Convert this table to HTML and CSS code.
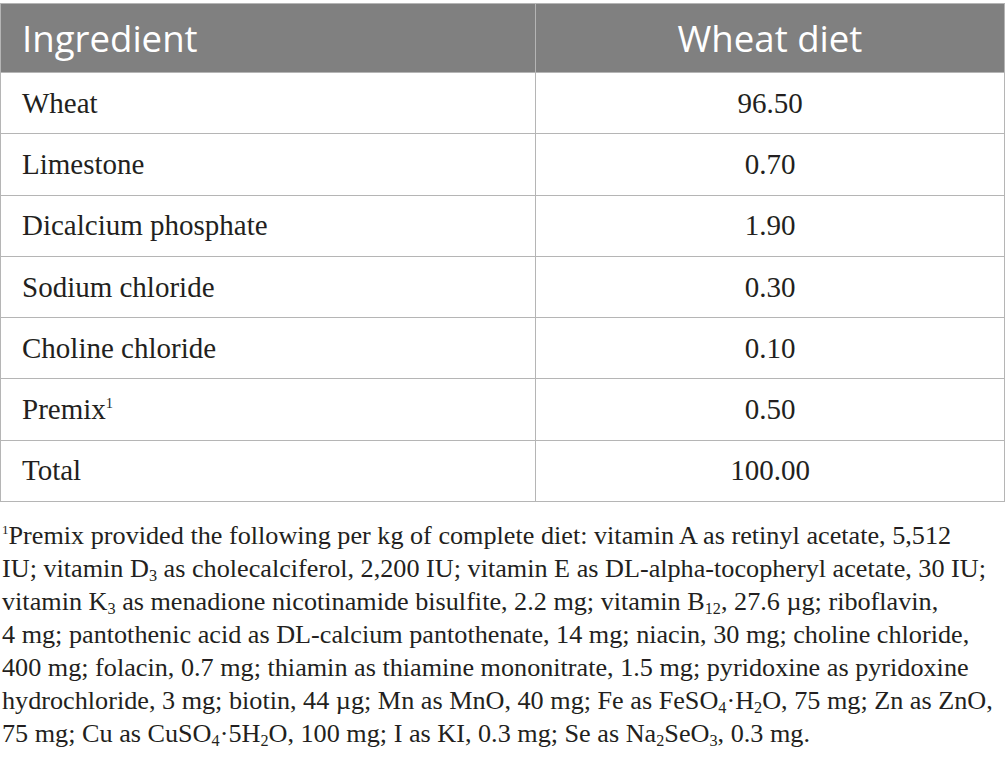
FILE: index.html
```html
<!DOCTYPE html>
<html lang="en">
<head>
<meta charset="utf-8">
<title>Diet composition</title>
<link rel="stylesheet" href="styles.css">
</head>
<body>
<div class="page">
  <table class="diet">
    <colgroup>
      <col class="col-name">
      <col class="col-val">
    </colgroup>
    <thead>
      <tr><th class="h-name">Ingredient</th><th class="h-val">Wheat diet</th></tr>
    </thead>
    <tbody>
      <tr><td class="name">Wheat</td><td class="num">96.50</td></tr>
      <tr><td class="name">Limestone</td><td class="num">0.70</td></tr>
      <tr><td class="name">Dicalcium phosphate</td><td class="num">1.90</td></tr>
      <tr><td class="name">Sodium chloride</td><td class="num">0.30</td></tr>
      <tr><td class="name">Choline chloride</td><td class="num">0.10</td></tr>
      <tr><td class="name">Premix<sup class="ref">1</sup></td><td class="num">0.50</td></tr>
      <tr><td class="name">Total</td><td class="num">100.00</td></tr>
    </tbody>
  </table>
  <p class="note"><sup class="ref">1</sup>Premix provided the following per kg of complete diet: vitamin A as retinyl acetate, 5,512<br>IU; vitamin D<sub>3</sub> as cholecalciferol, 2,200 IU; vitamin E as DL-alpha-tocopheryl acetate, 30 IU;<br>vitamin K<sub>3</sub> as menadione nicotinamide bisulfite, 2.2 mg; vitamin B<sub>12</sub>, 27.6 µg; riboflavin,<br>4 mg; pantothenic acid as DL-calcium pantothenate, 14 mg; niacin, 30 mg; choline chloride,<br>400 mg; folacin, 0.7 mg; thiamin as thiamine mononitrate, 1.5 mg; pyridoxine as pyridoxine<br>hydrochloride, 3 mg; biotin, 44 µg; Mn as MnO, 40 mg; Fe as FeSO<sub>4</sub>·H<sub>2</sub>O, 75 mg; Zn as ZnO,<br>75 mg; Cu as CuSO<sub>4</sub>·5H<sub>2</sub>O, 100 mg; I as KI, 0.3 mg; Se as Na<sub>2</sub>SeO<sub>3</sub>, 0.3 mg.</p>
</div>
</body>
</html>
```

FILE: styles.css
```css
html, body {
  margin: 0;
  padding: 0;
  background: #ffffff;
}

body {
  font-family: "Liberation Serif", "Times New Roman", serif;
  color: #231f20;
}

.page {
  padding-top: 3px;
  width: 1005px;
}

.diet {
  width: 1005px;
  border-collapse: collapse;
  table-layout: fixed;
}

.col-name {
  width: 535px;
}

.diet th,
.diet td {
  border: 1px solid #b5b5b5;
  padding: 0;
}

.diet th {
  background: #808080;
  color: #ffffff;
  font-family: "Open Sans", "Noto Sans", sans-serif;
  font-weight: 400;
  font-size: 36.6px;
  height: 68px;
  vertical-align: middle;
}

.diet th.h-name {
  text-align: left;
  padding-left: 21px;
}

.diet th.h-val {
  text-align: center;
}

.diet td {
  font-size: 29px;
  height: 60.3px;
  vertical-align: middle;
}

.diet td.name {
  padding-left: 21px;
}

.diet td.num {
  text-align: center;
}

.ref {
  font-size: 0.5em;
  vertical-align: 0.75em;
  line-height: 0;
}

.note {
  margin: 17px 0 0 0;
  padding-left: 2px;
  font-size: 26.2px;
  line-height: 33px;
  white-space: nowrap;
}

.note sub {
  font-size: 0.62em;
  vertical-align: -0.25em;
  line-height: 0;
}
```
